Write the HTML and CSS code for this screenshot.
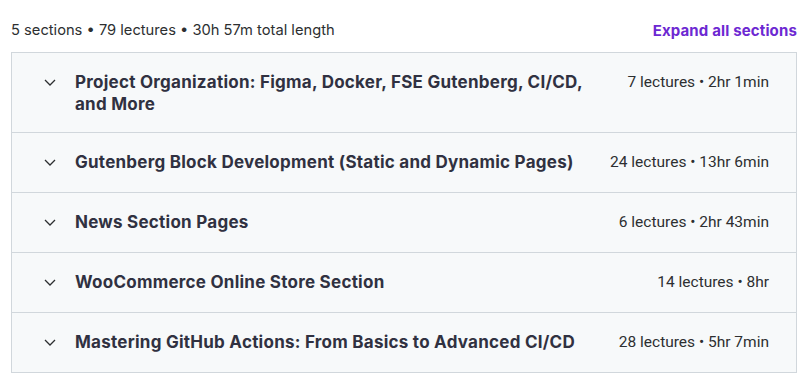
FILE: index.html
```html
<!DOCTYPE html>
<html lang="en">

<head>
    <meta charset="UTF-8">
    <meta name="viewport" content="width=device-width, initial-scale=1.0">
    <title>Course content</title>
    <link rel="stylesheet" href="styles.css">
</head>

<body>
    <div class="curriculum">
        <!-- Summary Row -->
        <div class="summary">
            <span class="stats">5 sections • 79 lectures • 30h 57m total length</span>
            <a href="#" class="expand-all">Expand all sections</a>
        </div>

        <!-- Sections -->
        <div class="sections">
            <div class="section">
                <svg class="chevron" viewBox="0 0 16 16"><path d="M3 6l5 5 5-5"/></svg>
                <h3 class="title">Project Organization: Figma, Docker, FSE Gutenberg, CI/CD, and More</h3>
                <span class="meta">7 lectures • 2hr 1min</span>
            </div>
            <div class="section">
                <svg class="chevron" viewBox="0 0 16 16"><path d="M3 6l5 5 5-5"/></svg>
                <h3 class="title">Gutenberg Block Development (Static and Dynamic Pages)</h3>
                <span class="meta">24 lectures • 13hr 6min</span>
            </div>
            <div class="section">
                <svg class="chevron" viewBox="0 0 16 16"><path d="M3 6l5 5 5-5"/></svg>
                <h3 class="title">News Section Pages</h3>
                <span class="meta">6 lectures • 2hr 43min</span>
            </div>
            <div class="section">
                <svg class="chevron" viewBox="0 0 16 16"><path d="M3 6l5 5 5-5"/></svg>
                <h3 class="title">WooCommerce Online Store Section</h3>
                <span class="meta">14 lectures • 8hr</span>
            </div>
            <div class="section">
                <svg class="chevron" viewBox="0 0 16 16"><path d="M3 6l5 5 5-5"/></svg>
                <h3 class="title">Mastering GitHub Actions: From Basics to Advanced CI/CD</h3>
                <span class="meta">28 lectures • 5hr 7min</span>
            </div>
        </div>
    </div>
</body>

</html>
```

FILE: styles.css
```css
body {
    margin: 0;
    background-color: #fff;
    font-family: Inter, "Noto Sans", sans-serif;
    color: #2d2f31;
}

.curriculum {
    padding: 18px 5px 0 11px;
}

/* Summary */
.summary {
    display: flex;
    justify-content: space-between;
    align-items: center;
    height: 24px;
    margin-bottom: 10px;
}

.stats {
    font-size: 14.7px;
    color: #2d2f31;
}

.expand-all {
    font-size: 15px;
    font-weight: 700;
    letter-spacing: 0.15px;
    color: #6d28d2;
    text-decoration: none;
}

/* Sections */
.sections {
    border: 1px solid #d1d7dc;
    border-top: none;
}

.section {
    display: flex;
    align-items: flex-start;
    box-sizing: border-box;
    min-height: 60px;
    background-color: #f7f9fa;
    border-top: 1px solid #d1d7dc;
    padding: 18px 27px 17px 30px;
}

.chevron {
    width: 16px;
    height: 16px;
    margin-top: 3px;
    margin-right: 17px;
    flex-shrink: 0;
    fill: none;
    stroke: #2d2f31;
    stroke-width: 1.3;
}

.title {
    flex: 1;
    margin: 0;
    font-size: 17px;
    line-height: 22px;
    letter-spacing: 0.25px;
    font-weight: 700;
    color: #303141;
}

.meta {
    margin-left: 24px;
    font-family: Roboto, sans-serif;
    font-size: 15.5px;
    line-height: 22px;
    color: #2d2f31;
    white-space: nowrap;
}
```
